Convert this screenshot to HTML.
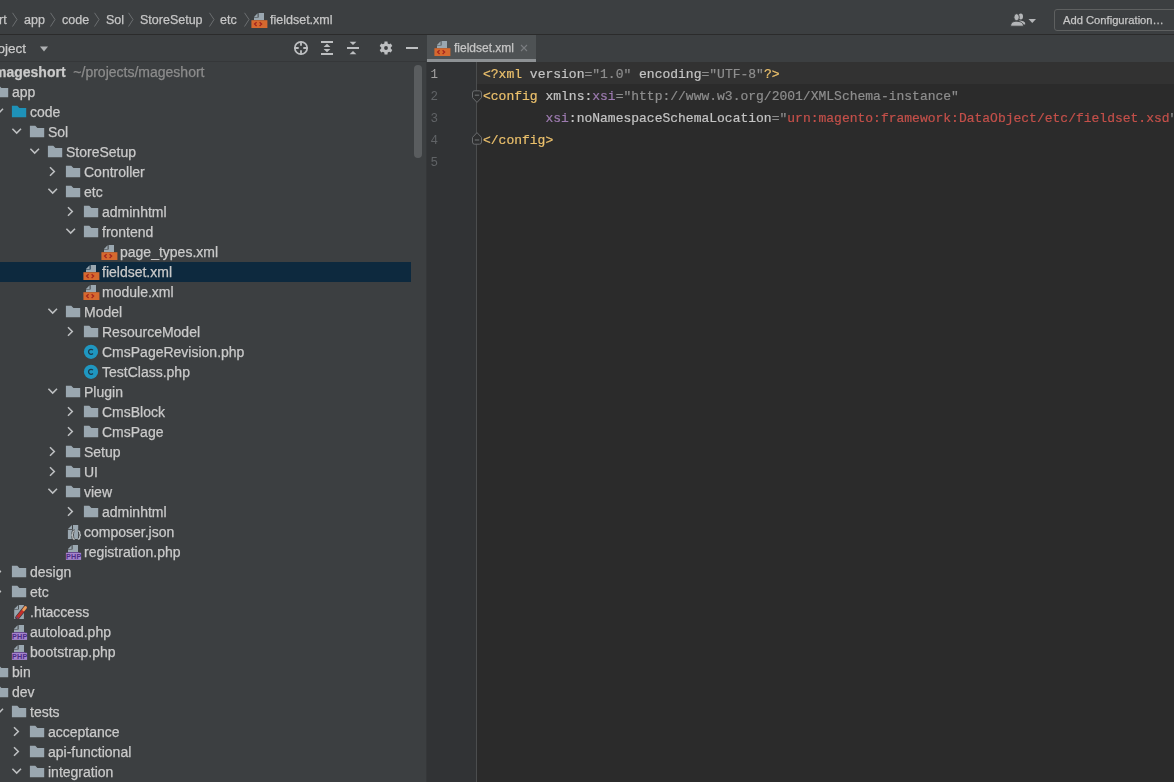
<!DOCTYPE html>
<html><head><meta charset="utf-8"><style>
*{margin:0;padding:0;box-sizing:border-box}
html,body{width:1174px;height:782px;overflow:hidden;background:#3C3F41;font-family:"Liberation Sans",sans-serif;color:#BBBBBB}
.tl,.bc,#tabtext,#btntext{-webkit-text-stroke:0.25px currentColor}
.tl,.bc,#tabtext,#btntext,.code,.ln{will-change:transform}
.abs{position:absolute}
.ic{position:absolute;overflow:visible}
#topbar{position:absolute;left:0;top:0;width:1174px;height:34px;background:#3C3F41}
#sep1{position:absolute;left:0;top:34px;width:1174px;height:1px;background:#2B2B2B}
.bc{position:absolute;top:12px;font-size:12.5px;line-height:16px;color:#C6C6C6;white-space:nowrap}
.bchev{position:absolute;top:12px}
#btn{position:absolute;left:1054px;top:9px;width:130px;height:22px;border:1px solid #5E6060;border-radius:3px}
#btntext{position:absolute;left:1063px;top:13px;font-size:11.2px;line-height:14px;color:#C6C6C6;white-space:nowrap}
#projhdr{position:absolute;left:0;top:35px;width:426px;height:26px;background:#3C3F41}
#sep2{position:absolute;left:0;top:61px;width:426px;height:1px;background:#353739}
#tree{position:absolute;left:0;top:62px;width:426px;height:720px;background:#3C3F41;overflow:hidden}
.tl{position:absolute;height:20px;line-height:20px;font-size:14px;white-space:nowrap;color:#CACACA}
.tl b{font-weight:bold}
.dim{color:#8C8C8C}
.selrow{position:absolute;left:0;width:411px;height:20px;background:#0D293E}
#vsep{position:absolute;left:426px;top:62px;width:1px;height:720px;background:#353739}
#tabbar{position:absolute;left:427px;top:35px;width:747px;height:27px;background:#3C3F41}
#tab{position:absolute;left:427px;top:35px;width:109px;height:27px;background:#4E5254}
#tabul{position:absolute;left:427px;top:59px;width:109px;height:3px;background:#8D9194}
#tabtext{position:absolute;left:454px;top:41px;font-size:12px;line-height:14px;color:#C6C6C6;white-space:nowrap}
#gutter{position:absolute;left:427px;top:62px;width:50px;height:720px;background:#313335}
#gline{position:absolute;left:476px;top:62px;width:1px;height:720px;background:#4B4D4E}
#editor{position:absolute;left:477px;top:62px;width:697px;height:720px;background:#2B2B2B}
#curline{position:absolute;left:477px;top:62px;width:697px;height:22px;background:#323232}
.ln{position:absolute;left:427px;width:12px;text-align:right;height:22px;line-height:25px;font-family:"Liberation Mono",monospace;font-size:12.5px;color:#606366}
.code{position:absolute;left:483px;height:22px;line-height:25px;font-family:"Liberation Mono",monospace;font-size:13px;white-space:pre;color:#BABABA}
.t{color:#EBC06C} .a{color:#C4C4C4} .ns{color:#9D7BB0} .v{color:#8E8E8E} .err{color:#C4504A}
.code{-webkit-text-stroke:0.2px currentColor}
#scroll{position:absolute;left:414px;top:65px;width:8px;height:93px;border-radius:4px;background:#5A5D5F}
</style></head><body>
<div id="topbar"></div>
<div id="sep1"></div>
<div class="bc" style="left:-1px">rt</div>
<div class="bc" style="left:24px">app</div>
<div class="bc" style="left:62px">code</div>
<div class="bc" style="left:106px">Sol</div>
<div class="bc" style="left:140px">StoreSetup</div>
<div class="bc" style="left:220px">etc</div>
<svg class="ic" style="left:12px;top:12px" width="6" height="16" viewBox="0 0 6 16"><path d="M0.5 0.8L5 7.5 0.5 14.5" stroke="#6B6E70" stroke-width="1" fill="none"/></svg>
<svg class="ic" style="left:50px;top:12px" width="6" height="16" viewBox="0 0 6 16"><path d="M0.5 0.8L5 7.5 0.5 14.5" stroke="#6B6E70" stroke-width="1" fill="none"/></svg>
<svg class="ic" style="left:94px;top:12px" width="6" height="16" viewBox="0 0 6 16"><path d="M0.5 0.8L5 7.5 0.5 14.5" stroke="#6B6E70" stroke-width="1" fill="none"/></svg>
<svg class="ic" style="left:128px;top:12px" width="6" height="16" viewBox="0 0 6 16"><path d="M0.5 0.8L5 7.5 0.5 14.5" stroke="#6B6E70" stroke-width="1" fill="none"/></svg>
<svg class="ic" style="left:209px;top:12px" width="6" height="16" viewBox="0 0 6 16"><path d="M0.5 0.8L5 7.5 0.5 14.5" stroke="#6B6E70" stroke-width="1" fill="none"/></svg>
<svg class="ic" style="left:244px;top:12px" width="6" height="16" viewBox="0 0 6 16"><path d="M0.5 0.8L5 7.5 0.5 14.5" stroke="#6B6E70" stroke-width="1" fill="none"/></svg>
<svg class="ic" style="left:251px;top:12px" width="16" height="16" viewBox="0 0 16 16"><path d="M3 5L6.6 1.2V5z" fill="#9AA7B0"/><path d="M7.6 1H13V8H3V5.6H7.6z" fill="#9AA7B0"/><rect x="0.4" y="8.2" width="16" height="7.8" fill="#D6692F"/><path d="M5.6 10.2L3.6 12.1l2 1.9M8.6 10.2l2 1.9-2 1.9" stroke="#A3241E" stroke-width="1.3" fill="none"/></svg>
<div class="bc" style="left:270px">fieldset.xml</div>
<svg class="ic" style="left:0;top:0" width="1174" height="40" viewBox="0 0 1174 40">
<ellipse cx="1020.8" cy="16.6" rx="2.2" ry="3" fill="#B4B6B8"/>
<path d="M1019 20.6c3 0 6.2.8 6.2 3.2v.6h-3z" fill="#B4B6B8"/>
<ellipse cx="1016.6" cy="17.2" rx="2.7" ry="3.5" fill="#B4B6B8" stroke="#3C3F41" stroke-width="0.9"/>
<path d="M1010.6 26.2c0-3.6 2.4-4.9 6-4.9s6.9 1.3 6.9 4.9z" fill="#B4B6B8" stroke="#3C3F41" stroke-width="0.9"/>
<path d="M1028.5 19h7.5l-3.75 4z" fill="#B4B6B8"/>
</svg>
<div id="btn"></div>
<div id="btntext">Add Configuration…</div>
<div id="projhdr"></div>
<div class="tl" style="left:-16px;top:39px;font-size:13.5px">Project</div>
<svg class="ic" style="left:39px;top:45px" width="10" height="8" viewBox="0 0 10 8"><path d="M1 1.5h8L5 6.5z" fill="#AFB1B3"/></svg>
<svg class="ic" style="left:0;top:0" width="430" height="62" viewBox="0 0 430 62">
<circle cx="301" cy="48" r="6.2" stroke="#BDBFC1" stroke-width="1.7" fill="none"/>
<path d="M301 41.5v4.2M301 50.3v4.2M294.5 48h4.2M303.3 48h4.2" stroke="#BDBFC1" stroke-width="1.8"/>
<path d="M321 42h12M321 54h12" stroke="#BDBFC1" stroke-width="2"/>
<path d="M323.6 47l3.4-3.3 3.4 3.3zM323.6 49l3.4 3.3 3.4-3.3z" fill="#BDBFC1"/>
<path d="M347 48h12" stroke="#BDBFC1" stroke-width="2"/>
<path d="M349.6 41.8l3.4 3.3 3.4-3.3zM349.6 54.2l3.4-3.3 3.4 3.3z" fill="#BDBFC1"/>
<path fill="#BDBFC1" fill-rule="evenodd" d="M384.32 43.40 L384.52 41.57 L387.48 41.57 L387.68 43.40 L389.15 44.25 L390.83 43.50 L392.31 46.07 L390.83 47.15 L390.83 48.85 L392.31 49.93 L390.83 52.50 L389.15 51.75 L387.68 52.60 L387.48 54.43 L384.52 54.43 L384.32 52.60 L382.85 51.75 L381.17 52.50 L379.69 49.93 L381.17 48.85 L381.17 47.15 L379.69 46.07 L381.17 43.50 L382.85 44.25Z M386 46.1a1.9 1.9 0 1 0 0 3.8a1.9 1.9 0 1 0 0-3.8z"/>
<path d="M406 48h12" stroke="#BDBFC1" stroke-width="2"/>
</svg>
<div id="sep2"></div>
<div id="tree">
</div>
<svg class="ic" style="left:-45px;top:64px" width="16" height="16" viewBox="0 0 16 16"><path d="M3.4 4.8l4.3 4.3 4.3-4.3" stroke="#BEC0C2" stroke-width="1.55" fill="none"/></svg><div class="tl" style="top:62px;left:-6px"><b>mageshort</b><span class="dim">&nbsp;&nbsp;~/projects/mageshort</span></div>
<svg class="ic" style="left:-27px;top:84px" width="16" height="16" viewBox="0 0 16 16"><path d="M3.4 4.8l4.3 4.3 4.3-4.3" stroke="#BEC0C2" stroke-width="1.55" fill="none"/></svg><svg class="ic" style="left:-7px;top:84px" width="16" height="16" viewBox="0 0 16 16"><path d="M0.9 1.8h5.4l2.1 2.3h6.8v9.1H0.9z" fill="#9AA7B0"/></svg><div class="tl" style="top:82px;left:12px">app</div>
<svg class="ic" style="left:-9px;top:104px" width="16" height="16" viewBox="0 0 16 16"><path d="M3.4 4.8l4.3 4.3 4.3-4.3" stroke="#BEC0C2" stroke-width="1.55" fill="none"/></svg><svg class="ic" style="left:11px;top:104px" width="16" height="16" viewBox="0 0 16 16"><path d="M0.9 1.8h5.4l2.1 2.3h6.8v9.1H0.9z" fill="#1E92B9"/></svg><div class="tl" style="top:102px;left:30px">code</div>
<svg class="ic" style="left:9px;top:124px" width="16" height="16" viewBox="0 0 16 16"><path d="M3.4 4.8l4.3 4.3 4.3-4.3" stroke="#BEC0C2" stroke-width="1.55" fill="none"/></svg><svg class="ic" style="left:29px;top:124px" width="16" height="16" viewBox="0 0 16 16"><path d="M0.9 1.8h5.4l2.1 2.3h6.8v9.1H0.9z" fill="#9AA7B0"/></svg><div class="tl" style="top:122px;left:48px">Sol</div>
<svg class="ic" style="left:27px;top:144px" width="16" height="16" viewBox="0 0 16 16"><path d="M3.4 4.8l4.3 4.3 4.3-4.3" stroke="#BEC0C2" stroke-width="1.55" fill="none"/></svg><svg class="ic" style="left:47px;top:144px" width="16" height="16" viewBox="0 0 16 16"><path d="M0.9 1.8h5.4l2.1 2.3h6.8v9.1H0.9z" fill="#9AA7B0"/></svg><div class="tl" style="top:142px;left:66px">StoreSetup</div>
<svg class="ic" style="left:45px;top:164px" width="16" height="16" viewBox="0 0 16 16"><path d="M5 3.2l4.3 4.3L5 11.8" stroke="#BEC0C2" stroke-width="1.55" fill="none"/></svg><svg class="ic" style="left:65px;top:164px" width="16" height="16" viewBox="0 0 16 16"><path d="M0.9 1.8h5.4l2.1 2.3h6.8v9.1H0.9z" fill="#9AA7B0"/></svg><div class="tl" style="top:162px;left:84px">Controller</div>
<svg class="ic" style="left:45px;top:184px" width="16" height="16" viewBox="0 0 16 16"><path d="M3.4 4.8l4.3 4.3 4.3-4.3" stroke="#BEC0C2" stroke-width="1.55" fill="none"/></svg><svg class="ic" style="left:65px;top:184px" width="16" height="16" viewBox="0 0 16 16"><path d="M0.9 1.8h5.4l2.1 2.3h6.8v9.1H0.9z" fill="#9AA7B0"/></svg><div class="tl" style="top:182px;left:84px">etc</div>
<svg class="ic" style="left:63px;top:204px" width="16" height="16" viewBox="0 0 16 16"><path d="M5 3.2l4.3 4.3L5 11.8" stroke="#BEC0C2" stroke-width="1.55" fill="none"/></svg><svg class="ic" style="left:83px;top:204px" width="16" height="16" viewBox="0 0 16 16"><path d="M0.9 1.8h5.4l2.1 2.3h6.8v9.1H0.9z" fill="#9AA7B0"/></svg><div class="tl" style="top:202px;left:102px">adminhtml</div>
<svg class="ic" style="left:63px;top:224px" width="16" height="16" viewBox="0 0 16 16"><path d="M3.4 4.8l4.3 4.3 4.3-4.3" stroke="#BEC0C2" stroke-width="1.55" fill="none"/></svg><svg class="ic" style="left:83px;top:224px" width="16" height="16" viewBox="0 0 16 16"><path d="M0.9 1.8h5.4l2.1 2.3h6.8v9.1H0.9z" fill="#9AA7B0"/></svg><div class="tl" style="top:222px;left:102px">frontend</div>
<svg class="ic" style="left:101px;top:244px" width="16" height="16" viewBox="0 0 16 16"><path d="M3 5L6.6 1.2V5z" fill="#9AA7B0"/><path d="M7.6 1H13V8H3V5.6H7.6z" fill="#9AA7B0"/><rect x="0.4" y="8.2" width="16" height="7.8" fill="#D6692F"/><path d="M5.6 10.2L3.6 12.1l2 1.9M8.6 10.2l2 1.9-2 1.9" stroke="#A3241E" stroke-width="1.3" fill="none"/></svg><div class="tl" style="top:242px;left:120px">page_types.xml</div>
<div class="selrow" style="top:262px"></div><svg class="ic" style="left:83px;top:264px" width="16" height="16" viewBox="0 0 16 16"><path d="M3 5L6.6 1.2V5z" fill="#9AA7B0"/><path d="M7.6 1H13V8H3V5.6H7.6z" fill="#9AA7B0"/><rect x="0.4" y="8.2" width="16" height="7.8" fill="#D6692F"/><path d="M5.6 10.2L3.6 12.1l2 1.9M8.6 10.2l2 1.9-2 1.9" stroke="#A3241E" stroke-width="1.3" fill="none"/></svg><div class="tl" style="top:262px;left:102px">fieldset.xml</div>
<svg class="ic" style="left:83px;top:284px" width="16" height="16" viewBox="0 0 16 16"><path d="M3 5L6.6 1.2V5z" fill="#9AA7B0"/><path d="M7.6 1H13V8H3V5.6H7.6z" fill="#9AA7B0"/><rect x="0.4" y="8.2" width="16" height="7.8" fill="#D6692F"/><path d="M5.6 10.2L3.6 12.1l2 1.9M8.6 10.2l2 1.9-2 1.9" stroke="#A3241E" stroke-width="1.3" fill="none"/></svg><div class="tl" style="top:282px;left:102px">module.xml</div>
<svg class="ic" style="left:45px;top:304px" width="16" height="16" viewBox="0 0 16 16"><path d="M3.4 4.8l4.3 4.3 4.3-4.3" stroke="#BEC0C2" stroke-width="1.55" fill="none"/></svg><svg class="ic" style="left:65px;top:304px" width="16" height="16" viewBox="0 0 16 16"><path d="M0.9 1.8h5.4l2.1 2.3h6.8v9.1H0.9z" fill="#9AA7B0"/></svg><div class="tl" style="top:302px;left:84px">Model</div>
<svg class="ic" style="left:63px;top:324px" width="16" height="16" viewBox="0 0 16 16"><path d="M5 3.2l4.3 4.3L5 11.8" stroke="#BEC0C2" stroke-width="1.55" fill="none"/></svg><svg class="ic" style="left:83px;top:324px" width="16" height="16" viewBox="0 0 16 16"><path d="M0.9 1.8h5.4l2.1 2.3h6.8v9.1H0.9z" fill="#9AA7B0"/></svg><div class="tl" style="top:322px;left:102px">ResourceModel</div>
<svg class="ic" style="left:83px;top:344px" width="16" height="16" viewBox="0 0 16 16"><circle cx="8" cy="7.8" r="7.1" fill="#1F97C1"/><path d="M9.9 6.1A2.5 2.5 0 1 0 9.9 9.5" stroke="#1A3A4C" stroke-width="1.3" fill="none"/></svg><div class="tl" style="top:342px;left:102px">CmsPageRevision.php</div>
<svg class="ic" style="left:83px;top:364px" width="16" height="16" viewBox="0 0 16 16"><circle cx="8" cy="7.8" r="7.1" fill="#1F97C1"/><path d="M9.9 6.1A2.5 2.5 0 1 0 9.9 9.5" stroke="#1A3A4C" stroke-width="1.3" fill="none"/></svg><div class="tl" style="top:362px;left:102px">TestClass.php</div>
<svg class="ic" style="left:45px;top:384px" width="16" height="16" viewBox="0 0 16 16"><path d="M3.4 4.8l4.3 4.3 4.3-4.3" stroke="#BEC0C2" stroke-width="1.55" fill="none"/></svg><svg class="ic" style="left:65px;top:384px" width="16" height="16" viewBox="0 0 16 16"><path d="M0.9 1.8h5.4l2.1 2.3h6.8v9.1H0.9z" fill="#9AA7B0"/></svg><div class="tl" style="top:382px;left:84px">Plugin</div>
<svg class="ic" style="left:63px;top:404px" width="16" height="16" viewBox="0 0 16 16"><path d="M5 3.2l4.3 4.3L5 11.8" stroke="#BEC0C2" stroke-width="1.55" fill="none"/></svg><svg class="ic" style="left:83px;top:404px" width="16" height="16" viewBox="0 0 16 16"><path d="M0.9 1.8h5.4l2.1 2.3h6.8v9.1H0.9z" fill="#9AA7B0"/></svg><div class="tl" style="top:402px;left:102px">CmsBlock</div>
<svg class="ic" style="left:63px;top:424px" width="16" height="16" viewBox="0 0 16 16"><path d="M5 3.2l4.3 4.3L5 11.8" stroke="#BEC0C2" stroke-width="1.55" fill="none"/></svg><svg class="ic" style="left:83px;top:424px" width="16" height="16" viewBox="0 0 16 16"><path d="M0.9 1.8h5.4l2.1 2.3h6.8v9.1H0.9z" fill="#9AA7B0"/></svg><div class="tl" style="top:422px;left:102px">CmsPage</div>
<svg class="ic" style="left:45px;top:444px" width="16" height="16" viewBox="0 0 16 16"><path d="M5 3.2l4.3 4.3L5 11.8" stroke="#BEC0C2" stroke-width="1.55" fill="none"/></svg><svg class="ic" style="left:65px;top:444px" width="16" height="16" viewBox="0 0 16 16"><path d="M0.9 1.8h5.4l2.1 2.3h6.8v9.1H0.9z" fill="#9AA7B0"/></svg><div class="tl" style="top:442px;left:84px">Setup</div>
<svg class="ic" style="left:45px;top:464px" width="16" height="16" viewBox="0 0 16 16"><path d="M5 3.2l4.3 4.3L5 11.8" stroke="#BEC0C2" stroke-width="1.55" fill="none"/></svg><svg class="ic" style="left:65px;top:464px" width="16" height="16" viewBox="0 0 16 16"><path d="M0.9 1.8h5.4l2.1 2.3h6.8v9.1H0.9z" fill="#9AA7B0"/></svg><div class="tl" style="top:462px;left:84px">UI</div>
<svg class="ic" style="left:45px;top:484px" width="16" height="16" viewBox="0 0 16 16"><path d="M3.4 4.8l4.3 4.3 4.3-4.3" stroke="#BEC0C2" stroke-width="1.55" fill="none"/></svg><svg class="ic" style="left:65px;top:484px" width="16" height="16" viewBox="0 0 16 16"><path d="M0.9 1.8h5.4l2.1 2.3h6.8v9.1H0.9z" fill="#9AA7B0"/></svg><div class="tl" style="top:482px;left:84px">view</div>
<svg class="ic" style="left:63px;top:504px" width="16" height="16" viewBox="0 0 16 16"><path d="M5 3.2l4.3 4.3L5 11.8" stroke="#BEC0C2" stroke-width="1.55" fill="none"/></svg><svg class="ic" style="left:83px;top:504px" width="16" height="16" viewBox="0 0 16 16"><path d="M0.9 1.8h5.4l2.1 2.3h6.8v9.1H0.9z" fill="#9AA7B0"/></svg><div class="tl" style="top:502px;left:102px">adminhtml</div>
<svg class="ic" style="left:65px;top:524px" width="16" height="16" viewBox="0 0 16 16"><path d="M3 5L7 0.9V5z" fill="#9AA7B0"/><path d="M8 0.9H13.2V15H2.9V5.8H8z" fill="#9AA7B0"/><path d="M9.8 6.8C8.2 6.8 7.8 7.6 7.8 8.8V9.8C7.8 10.6 7.2 11 6.6 11C7.2 11 7.8 11.4 7.8 12.2V13.2C7.8 14.4 8.2 15.2 9.8 15.2M12.8 6.8C14.4 6.8 14.8 7.6 14.8 8.8V9.8C14.8 10.6 15.4 11 16 11C15.4 11 14.8 11.4 14.8 12.2V13.2C14.8 14.4 14.4 15.2 12.8 15.2" stroke="#3C3F41" stroke-width="2.6" fill="none"/><path d="M9.8 6.8C8.2 6.8 7.8 7.6 7.8 8.8V9.8C7.8 10.6 7.2 11 6.6 11C7.2 11 7.8 11.4 7.8 12.2V13.2C7.8 14.4 8.2 15.2 9.8 15.2M12.8 6.8C14.4 6.8 14.8 7.6 14.8 8.8V9.8C14.8 10.6 15.4 11 16 11C15.4 11 14.8 11.4 14.8 12.2V13.2C14.8 14.4 14.4 15.2 12.8 15.2" stroke="#BCC0C2" stroke-width="1.25" fill="none"/></svg><div class="tl" style="top:522px;left:84px">composer.json</div>
<svg class="ic" style="left:65px;top:544px" width="16" height="16" viewBox="0 0 16 16"><path d="M3 5L6.6 1.2V5z" fill="#9AA7B0"/><path d="M7.6 1H13V8H3V5.6H7.6z" fill="#9AA7B0"/><rect x="3" y="8" width="11" height="0.9" fill="#5B3C8C"/><rect x="0.9" y="8.8" width="15.2" height="7.1" fill="#A584CC"/><text x="8.7" y="15.2" font-family="Liberation Sans" font-weight="bold" font-size="7.2" fill="#4B2D83" text-anchor="middle" letter-spacing="0.2">PHP</text></svg><div class="tl" style="top:542px;left:84px">registration.php</div>
<svg class="ic" style="left:-9px;top:564px" width="16" height="16" viewBox="0 0 16 16"><path d="M5 3.2l4.3 4.3L5 11.8" stroke="#BEC0C2" stroke-width="1.55" fill="none"/></svg><svg class="ic" style="left:11px;top:564px" width="16" height="16" viewBox="0 0 16 16"><path d="M0.9 1.8h5.4l2.1 2.3h6.8v9.1H0.9z" fill="#9AA7B0"/></svg><div class="tl" style="top:562px;left:30px">design</div>
<svg class="ic" style="left:-9px;top:584px" width="16" height="16" viewBox="0 0 16 16"><path d="M5 3.2l4.3 4.3L5 11.8" stroke="#BEC0C2" stroke-width="1.55" fill="none"/></svg><svg class="ic" style="left:11px;top:584px" width="16" height="16" viewBox="0 0 16 16"><path d="M0.9 1.8h5.4l2.1 2.3h6.8v9.1H0.9z" fill="#9AA7B0"/></svg><div class="tl" style="top:582px;left:30px">etc</div>
<svg class="ic" style="left:11px;top:604px" width="16" height="16" viewBox="0 0 16 16"><path d="M3.2 5L7 1.3V5z" fill="#9AA7B0"/><path d="M7.8 1H12.9V15H3.2V5.6H7.8z" fill="#9AA7B0"/><path d="M6.3 13.6L14.8 3.2" stroke="#3C3F41" stroke-width="4.4" stroke-linecap="round"/><path d="M6.6 13.2L14.4 3.6" stroke="#C42F2B" stroke-width="3" stroke-linecap="round"/><path d="M12.6 5.8L14.6 3.4" stroke="#E9A25C" stroke-width="2.6" stroke-linecap="round"/><path d="M6 14.2l0.9-1.2" stroke="#6A3A7A" stroke-width="1.6"/></svg><div class="tl" style="top:602px;left:30px">.htaccess</div>
<svg class="ic" style="left:11px;top:624px" width="16" height="16" viewBox="0 0 16 16"><path d="M3 5L6.6 1.2V5z" fill="#9AA7B0"/><path d="M7.6 1H13V8H3V5.6H7.6z" fill="#9AA7B0"/><rect x="3" y="8" width="11" height="0.9" fill="#5B3C8C"/><rect x="0.9" y="8.8" width="15.2" height="7.1" fill="#A584CC"/><text x="8.7" y="15.2" font-family="Liberation Sans" font-weight="bold" font-size="7.2" fill="#4B2D83" text-anchor="middle" letter-spacing="0.2">PHP</text></svg><div class="tl" style="top:622px;left:30px">autoload.php</div>
<svg class="ic" style="left:11px;top:644px" width="16" height="16" viewBox="0 0 16 16"><path d="M3 5L6.6 1.2V5z" fill="#9AA7B0"/><path d="M7.6 1H13V8H3V5.6H7.6z" fill="#9AA7B0"/><rect x="3" y="8" width="11" height="0.9" fill="#5B3C8C"/><rect x="0.9" y="8.8" width="15.2" height="7.1" fill="#A584CC"/><text x="8.7" y="15.2" font-family="Liberation Sans" font-weight="bold" font-size="7.2" fill="#4B2D83" text-anchor="middle" letter-spacing="0.2">PHP</text></svg><div class="tl" style="top:642px;left:30px">bootstrap.php</div>
<svg class="ic" style="left:-27px;top:664px" width="16" height="16" viewBox="0 0 16 16"><path d="M5 3.2l4.3 4.3L5 11.8" stroke="#BEC0C2" stroke-width="1.55" fill="none"/></svg><svg class="ic" style="left:-7px;top:664px" width="16" height="16" viewBox="0 0 16 16"><path d="M0.9 1.8h5.4l2.1 2.3h6.8v9.1H0.9z" fill="#9AA7B0"/></svg><div class="tl" style="top:662px;left:12px">bin</div>
<svg class="ic" style="left:-27px;top:684px" width="16" height="16" viewBox="0 0 16 16"><path d="M5 3.2l4.3 4.3L5 11.8" stroke="#BEC0C2" stroke-width="1.55" fill="none"/></svg><svg class="ic" style="left:-7px;top:684px" width="16" height="16" viewBox="0 0 16 16"><path d="M0.9 1.8h5.4l2.1 2.3h6.8v9.1H0.9z" fill="#9AA7B0"/></svg><div class="tl" style="top:682px;left:12px">dev</div>
<svg class="ic" style="left:-9px;top:704px" width="16" height="16" viewBox="0 0 16 16"><path d="M3.4 4.8l4.3 4.3 4.3-4.3" stroke="#BEC0C2" stroke-width="1.55" fill="none"/></svg><svg class="ic" style="left:11px;top:704px" width="16" height="16" viewBox="0 0 16 16"><path d="M0.9 1.8h5.4l2.1 2.3h6.8v9.1H0.9z" fill="#9AA7B0"/></svg><div class="tl" style="top:702px;left:30px">tests</div>
<svg class="ic" style="left:9px;top:724px" width="16" height="16" viewBox="0 0 16 16"><path d="M5 3.2l4.3 4.3L5 11.8" stroke="#BEC0C2" stroke-width="1.55" fill="none"/></svg><svg class="ic" style="left:29px;top:724px" width="16" height="16" viewBox="0 0 16 16"><path d="M0.9 1.8h5.4l2.1 2.3h6.8v9.1H0.9z" fill="#9AA7B0"/></svg><div class="tl" style="top:722px;left:48px">acceptance</div>
<svg class="ic" style="left:9px;top:744px" width="16" height="16" viewBox="0 0 16 16"><path d="M5 3.2l4.3 4.3L5 11.8" stroke="#BEC0C2" stroke-width="1.55" fill="none"/></svg><svg class="ic" style="left:29px;top:744px" width="16" height="16" viewBox="0 0 16 16"><path d="M0.9 1.8h5.4l2.1 2.3h6.8v9.1H0.9z" fill="#9AA7B0"/></svg><div class="tl" style="top:742px;left:48px">api-functional</div>
<svg class="ic" style="left:9px;top:764px" width="16" height="16" viewBox="0 0 16 16"><path d="M3.4 4.8l4.3 4.3 4.3-4.3" stroke="#BEC0C2" stroke-width="1.55" fill="none"/></svg><svg class="ic" style="left:29px;top:764px" width="16" height="16" viewBox="0 0 16 16"><path d="M0.9 1.8h5.4l2.1 2.3h6.8v9.1H0.9z" fill="#9AA7B0"/></svg><div class="tl" style="top:762px;left:48px">integration</div>
<div id="scroll"></div>
<div id="vsep"></div>
<div id="tabbar"></div>
<div id="tab"></div>
<div id="tabul"></div>
<svg class="ic" style="left:434px;top:40px" width="16" height="16" viewBox="0 0 16 16"><path d="M3 5L6.6 1.2V5z" fill="#9AA7B0"/><path d="M7.6 1H13V8H3V5.6H7.6z" fill="#9AA7B0"/><rect x="0.4" y="8.2" width="16" height="7.8" fill="#D6692F"/><path d="M5.6 10.2L3.6 12.1l2 1.9M8.6 10.2l2 1.9-2 1.9" stroke="#A3241E" stroke-width="1.3" fill="none"/></svg>
<div id="tabtext">fieldset.xml</div>
<svg class="ic" style="left:519px;top:43px" width="10" height="10" viewBox="0 0 10 10"><path d="M2 2l6 6M8 2l-6 6" stroke="#7A7D80" stroke-width="1.1"/></svg>
<div id="gutter"></div>
<div id="gline"></div>
<div id="editor"></div>
<div id="curline"></div>
<div class="ln" style="top:63px;left:427px;width:11px;color:#A4A3A3">1</div>
<div class="ln" style="top:85px;left:427px;width:11px;color:#606366">2</div>
<div class="ln" style="top:107px;left:427px;width:11px;color:#606366">3</div>
<div class="ln" style="top:129px;left:427px;width:11px;color:#606366">4</div>
<div class="ln" style="top:151px;left:427px;width:11px;color:#606366">5</div>
<div class="code" style="top:62px"><span class="t">&lt;?</span><span class="t">xml</span> <span class="a">version</span><span class="v">="1.0"</span> <span class="a">encoding</span><span class="v">="UTF-8"</span><span class="t">?&gt;</span></div>
<div class="code" style="top:84px"><span class="t">&lt;config</span> <span class="a">xmlns:</span><span class="ns">xsi</span><span class="v">="http://www.w3.org/2001/XMLSchema-instance"</span></div>
<div class="code" style="top:106px">        <span class="ns">xsi</span><span class="a">:noNamespaceSchemaLocation</span><span class="v">="</span><span class="err">urn:magento:framework:DataObject/etc/fieldset.xsd</span><span class="v">"</span><span class="t">&gt;</span></div>
<div class="code" style="top:128px"><span class="t">&lt;/config&gt;</span></div>
<div class="code" style="top:150px"></div>
<svg class="ic" style="left:470.5px;top:90.3px" width="12" height="13" viewBox="0 0 12 13"><path d="M1.5 3Q1.5 0.8 3.5 0.8H8.5Q10.5 0.8 10.5 3V7.6L6 12.4 1.5 7.6z" stroke="#6A6C6E" stroke-width="1" fill="#2E2F30"/><path d="M3.8 5.2h4.4" stroke="#6A6C6E" stroke-width="1.2"/></svg>
<svg class="ic" style="left:470.5px;top:132.3px" width="12" height="13" viewBox="0 0 12 13"><path d="M1.5 10Q1.5 12.2 3.5 12.2H8.5Q10.5 12.2 10.5 10V5.4L6 0.6 1.5 5.4z" stroke="#6A6C6E" stroke-width="1" fill="#2E2F30"/><path d="M3.8 8h4.4" stroke="#6A6C6E" stroke-width="1.2"/></svg>
</body></html>
